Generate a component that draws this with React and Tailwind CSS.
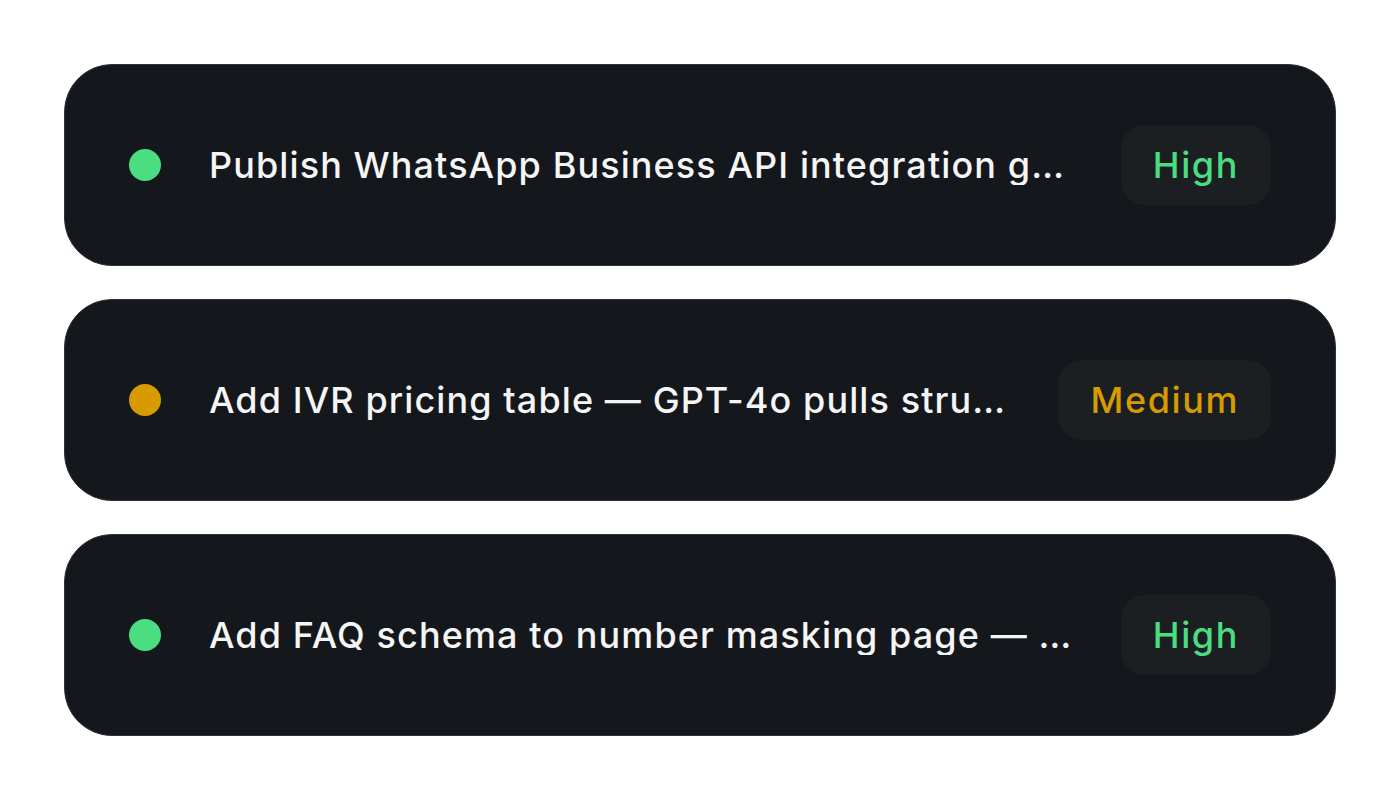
const tasks = [
  {
    title: "Publish WhatsApp Business API integration guide for enterprise teams",
    priority: "High",
  },
  {
    title: "Add IVR pricing table — GPT-4o pulls structured data from competitor pages",
    priority: "Medium",
  },
  {
    title: "Add FAQ schema to number masking page — boost rich results",
    priority: "High",
  },
];

const tone = {
  High: { dot: "bg-[#4ade80]", text: "text-[#4ade80]" },
  Medium: { dot: "bg-[#d79b00]", text: "text-[#d79b00]" },
};

const TaskRow = ({ title, priority }) => (
  <div className="flex items-center rounded-[48px] border border-[#2e3338] bg-[#14181d] px-16 py-[60px]">
    <span className={`h-8 w-8 shrink-0 rounded-full ${tone[priority].dot}`} />
    <p className="ml-12 min-w-0 flex-1 truncate text-[36px] leading-[40px] font-medium tracking-[1.1px] text-[#f5f5f5]">
      {title}
    </p>
    <span
      className={`ml-12 shrink-0 rounded-3xl bg-[#1b1f22] px-8 py-5 text-[36px] leading-[40px] font-medium tracking-[1.6px] ${tone[priority].text}`}
    >
      {priority}
    </span>
  </div>
);

export default function App() {
  return (
    <div
      className="min-h-[800px] w-full bg-white p-16"
      style={{ fontFamily: "Inter, 'Noto Sans', sans-serif" }}
    >
      <div className="flex flex-col gap-[33px]">
        {tasks.map((t) => (
          <TaskRow key={t.title} {...t} />
        ))}
      </div>
    </div>
  );
}
